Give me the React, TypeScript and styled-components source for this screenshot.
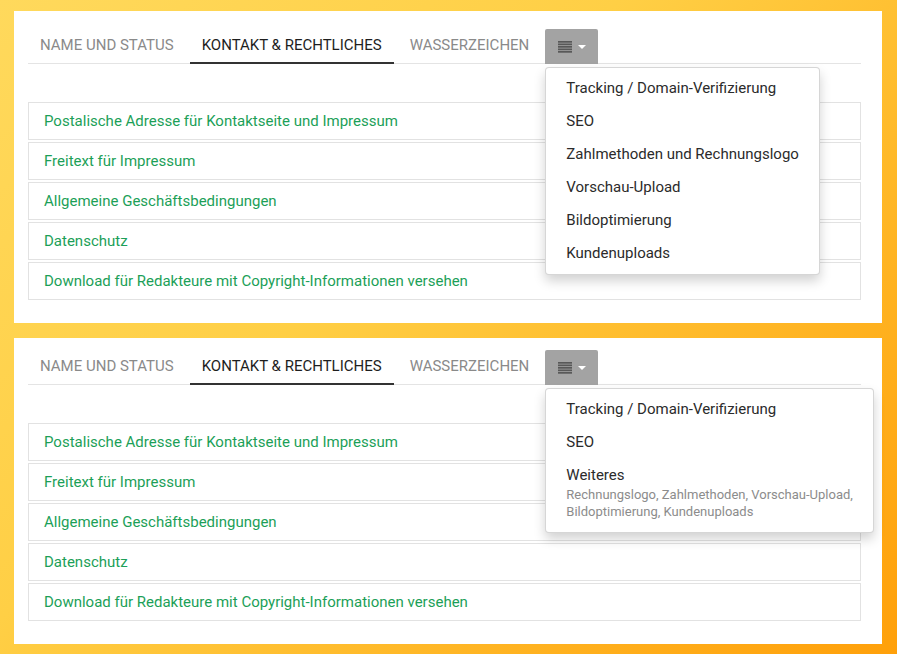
import React from "react";
import styled, { createGlobalStyle } from "styled-components";

const GlobalStyle = createGlobalStyle`
  html, body { margin: 0; padding: 0; }
  body { font-family: Roboto, "Liberation Sans", sans-serif; }
  * { box-sizing: border-box; }
`;

const Page = styled.div`
  width: 897px;
  height: 654px;
  padding: 11px 15px 11px 14px;
  display: flex;
  flex-direction: column;
  gap: 15px;
  background: linear-gradient(135deg, #ffd95c 0%, #ffcf45 40%, #ffb321 75%, #ffa00a 100%);
  overflow: hidden;
`;

const Panel = styled.section<{ $top: number }>`
  background: #fff;
  padding: ${(p) => p.$top}px 21px 23px 14px;
`;

const TabBar = styled.div`
  display: flex;
  align-items: stretch;
  height: 35px;
  border-bottom: 1px solid #e4e4e4;
`;

const Tab = styled.div<{ $active?: boolean }>`
  padding: 0 12px;
  margin-right: 4px;
  height: 35px;
  line-height: 33px;
  font-size: 15px;
  text-transform: uppercase;
  color: ${(p) => (p.$active ? "#1e1e1e" : "#8a8a8a")};
  border-bottom: 2px solid ${(p) => (p.$active ? "#333" : "transparent")};
  white-space: nowrap;
`;

const MenuWrap = styled.div`
  position: relative;
`;

const MenuButton = styled.div`
  width: 53px;
  height: 35px;
  background: #a3a3a3;
  border-radius: 2px 2px 0 0;
  display: flex;
  align-items: center;
  justify-content: center;
  gap: 6px;
`;

const Caret = styled.span`
  width: 0;
  height: 0;
  border-left: 4px solid transparent;
  border-right: 4px solid transparent;
  border-top: 4px solid #fff;
  margin-top: 1px;
`;

const Dropdown = styled.div`
  position: absolute;
  top: 38px;
  left: 0;
  min-width: 273px;
  width: max-content;
  background: #fff;
  border: 1px solid rgba(0, 0, 0, 0.16);
  border-radius: 4px;
  box-shadow: 0 6px 12px rgba(0, 0, 0, 0.18);
  padding: 4px 0;
  z-index: 5;
`;

const MenuItem = styled.div`
  padding: 8px 20px;
  font-size: 15px;
  line-height: 17px;
  color: #2b2b2b;
  white-space: nowrap;
`;

const MenuSub = styled.div`
  font-size: 13px;
  line-height: 17px;
  color: #8c8c8c;
  margin-top: 2px;
`;

const List = styled.div`
  margin-top: 38px;
  display: flex;
  flex-direction: column;
  gap: 2px;
`;

const Row = styled.div`
  height: 38px;
  border: 1px solid #e2e2e2;
  padding: 0 15px;
  display: flex;
  align-items: center;
  font-size: 15px;
  color: #1c9f58;
`;

const ListIcon = () => (
  <svg width="14" height="12" viewBox="0 0 14 12">
    {[0, 1, 2, 3, 4].map((i) => (
      <rect key={i} x="0" y={i * 2.5} width="14" height="1.7" fill="#585858" />
    ))}
  </svg>
);

const rows = [
  "Postalische Adresse für Kontaktseite und Impressum",
  "Freitext für Impressum",
  "Allgemeine Geschäftsbedingungen",
  "Datenschutz",
  "Download für Redakteure mit Copyright-Informationen versehen",
];

type Item = { title: string; sub?: React.ReactNode };

const menu1: Item[] = [
  { title: "Tracking / Domain-Verifizierung" },
  { title: "SEO" },
  { title: "Zahlmethoden und Rechnungslogo" },
  { title: "Vorschau-Upload" },
  { title: "Bildoptimierung" },
  { title: "Kundenuploads" },
];

const menu2: Item[] = [
  { title: "Tracking / Domain-Verifizierung" },
  { title: "SEO" },
  {
    title: "Weiteres",
    sub: (
      <>
        Rechnungslogo, Zahlmethoden, Vorschau-Upload,
        <br />
        Bildoptimierung, Kundenuploads
      </>
    ),
  },
];

const SettingsPanel = ({ top, items }: { top: number; items: Item[] }) => (
  <Panel $top={top}>
    <TabBar>
      <Tab>Name und Status</Tab>
      <Tab $active>Kontakt &amp; Rechtliches</Tab>
      <Tab>Wasserzeichen</Tab>
      <MenuWrap>
        <MenuButton>
          <ListIcon />
          <Caret />
        </MenuButton>
        <Dropdown>
          {items.map((it) => (
            <MenuItem key={it.title}>
              {it.title}
              {it.sub && <MenuSub>{it.sub}</MenuSub>}
            </MenuItem>
          ))}
        </Dropdown>
      </MenuWrap>
    </TabBar>
    <List>
      {rows.map((r) => (
        <Row key={r}>{r}</Row>
      ))}
    </List>
  </Panel>
);

export default function App() {
  return (
    <>
      <GlobalStyle />
      <Page>
        <SettingsPanel top={18} items={menu1} />
        <SettingsPanel top={12} items={menu2} />
      </Page>
    </>
  );
}
